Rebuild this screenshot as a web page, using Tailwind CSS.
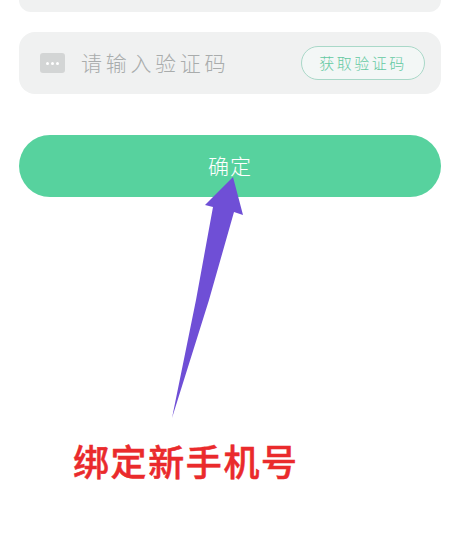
<!DOCTYPE html>
<html lang="zh">
  <head>
    <meta charset="UTF-8" />
    <title>绑定新手机号</title>
    <script src="https://cdn.jsdelivr.net/npm/@tailwindcss/browser@4"></script>
  </head>
  <body class="bg-white">
    <div class="relative w-[460px] h-[540px] overflow-hidden bg-white px-[19px] font-['Noto_Sans_CJK_SC',sans-serif]">
      <!-- previous field, cut off by the top edge -->
      <div class="h-3 rounded-b-2xl bg-[#f0f1f1]"></div>

      <!-- code field -->
      <div class="mt-5 flex h-[62px] items-center rounded-2xl bg-[#f0f1f1] pl-[21px] pr-4">
        <div class="flex h-5 w-[25px] items-center justify-center gap-[2px] rounded-[3px] bg-[#d3d5d5]">
          <span class="h-[3px] w-[3px] rounded-full bg-white"></span>
          <span class="h-[3px] w-[3px] rounded-full bg-white"></span>
          <span class="h-[3px] w-[3px] rounded-full bg-white"></span>
        </div>
        <span class="ml-4 text-[21px] font-light tracking-[3.7px] text-[#a9acac]">请输入验证码</span>
        <button class="ml-auto flex h-[34px] w-[124px] items-center justify-center rounded-full border border-[#a9d8c8] bg-[#f3f7f6] text-[15px] font-light tracking-[2.5px] text-[#63c9a2]">获取验证码</button>
      </div>

      <!-- confirm -->
      <button class="mt-[41px] flex h-[62px] w-full items-center justify-center rounded-full bg-[#57d29e] text-[21px] font-light tracking-[1px] text-white">确定</button>

      <!-- caption -->
      <p class="mt-[241px] pl-[54px] text-[36px] leading-[44px] font-medium tracking-[1.6px] text-[#ea2a2c] [-webkit-text-stroke:0.5px_#ea2a2c]">绑定新手机号</p>

      <!-- annotation arrow -->
      <svg class="absolute top-0 left-0" width="460" height="540" viewBox="0 0 460 540">
        <polygon points="233,177 205,205 213,207 196,300 172,418 209,300 234,212 243,215" fill="#6f4fd6" />
      </svg>
    </div>
  </body>
</html>
